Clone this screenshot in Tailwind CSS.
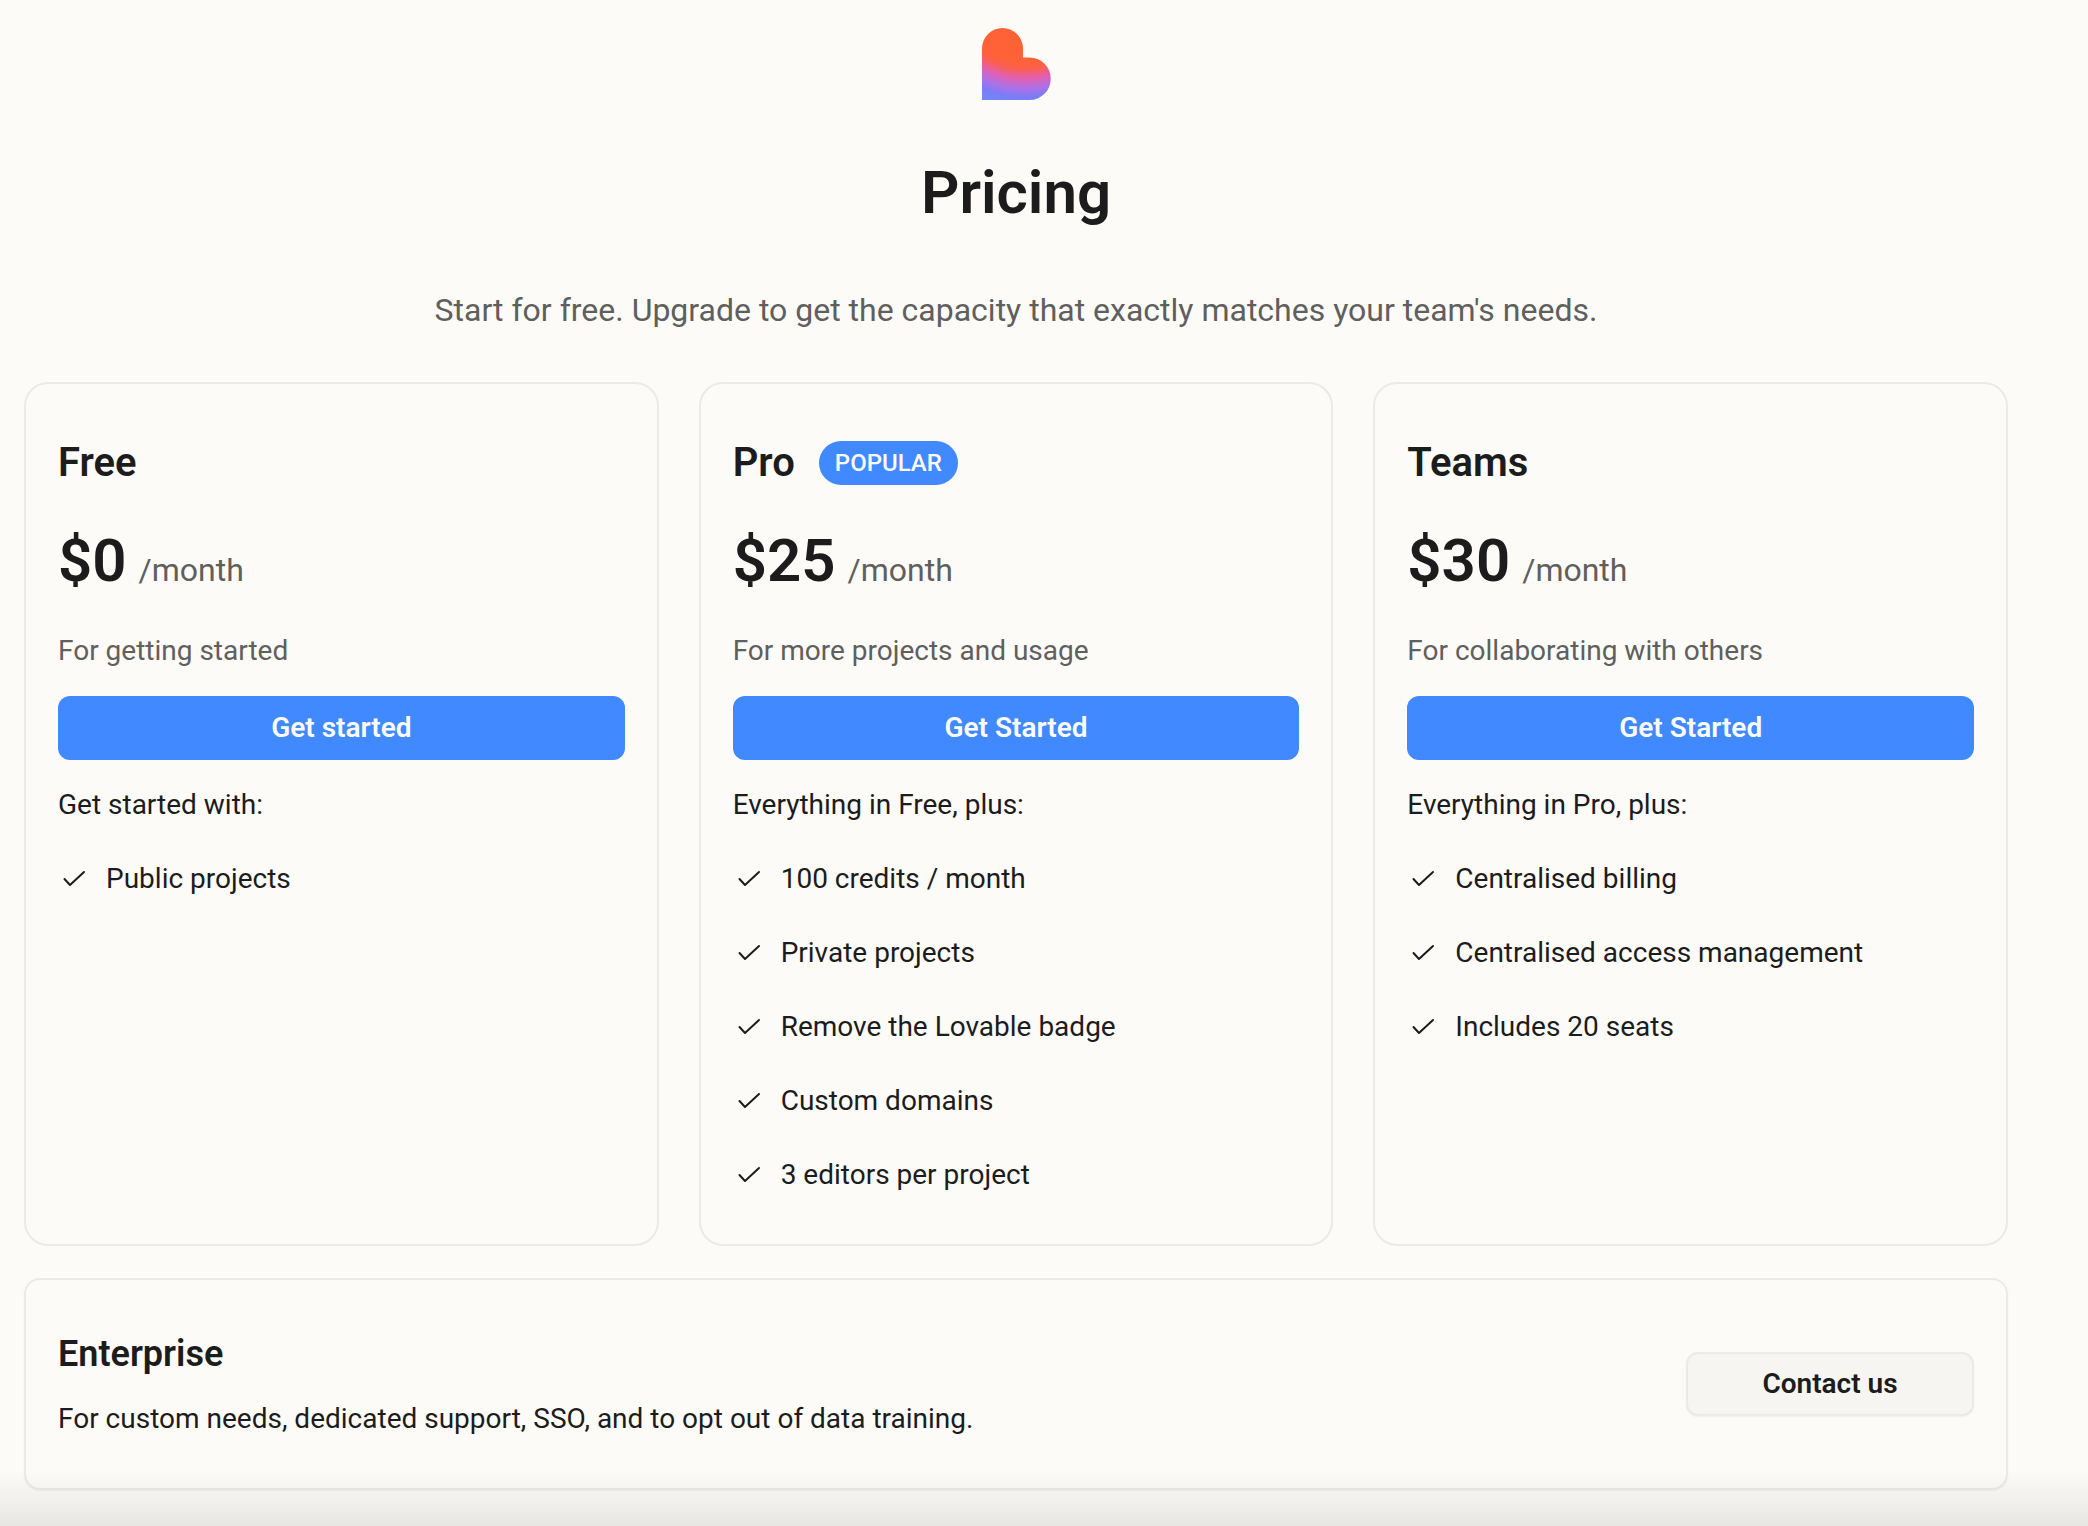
<!DOCTYPE html>
<html lang="en">
<head>
  <meta charset="UTF-8" />
  <meta name="viewport" content="width=device-width, initial-scale=1.0" />
  <title>Pricing | Lovable</title>
  <script src="https://cdn.jsdelivr.net/npm/@tailwindcss/browser@4"></script>
</head>
<body class="min-h-screen bg-[#fcfbf8] font-['Roboto',sans-serif] text-[28px] leading-[42px] text-[#1c1c1c]">
  <main class="pt-7 pb-9 pl-6 pr-20">
    <header class="flex flex-col items-center text-center">
      <svg class="h-[72px] w-[69px]" viewBox="0 0 69 72" aria-label="Lovable" role="img">
        <defs>
          <radialGradient id="heart" gradientUnits="userSpaceOnUse" cx="43" cy="-35" r="112">
            <stop offset="0.62" stop-color="#ff6236" />
            <stop offset="0.68" stop-color="#fa5f50" />
            <stop offset="0.76" stop-color="#e45fae" />
            <stop offset="0.86" stop-color="#a872ea" />
            <stop offset="0.93" stop-color="#7a7cf7" />
            <stop offset="1" stop-color="#7088f5" />
          </radialGradient>
        </defs>
        <path fill="url(#heart)" d="M0 20.5a20.5 20.5 0 0 1 41 0V29.5h6.5a21.25 21.25 0 0 1 0 42.5H0z" />
      </svg>
      <h1 class="mt-[63px] text-[60px] leading-[60px] font-semibold">Pricing</h1>
      <p class="mt-[63px] text-[32px] leading-[48px] text-[#5f5f5d]">Start for free. Upgrade to get the capacity that exactly matches your team's needs.</p>
    </header>

    <section id="plans" class="mt-12 grid grid-cols-3 gap-10"></section>

    <section class="mt-8 flex items-center justify-between rounded-2xl border-2 border-[#eceae6] px-8 py-12 shadow-xs">
      <div>
        <h2 class="text-[36px] leading-[52px] font-semibold">Enterprise</h2>
        <p class="mt-[18px]">For custom needs, dedicated support, SSO, and to opt out of data training.</p>
      </div>
      <button type="button" class="h-16 w-72 rounded-xl border-2 border-[#eceae6] bg-[#f6f5f1] font-semibold shadow-xs">Contact us</button>
    </section>
  </main>

  <!-- fade at the bottom of the window -->
  <div class="pointer-events-none fixed inset-x-0 bottom-0 h-14 bg-linear-to-b from-black/0 to-black/8"></div>

  <script>
    const plans = [
      {
        name: 'Free',
        price: '$0',
        description: 'For getting started',
        button: 'Get started',
        intro: 'Get started with:',
        features: ['Public projects'],
      },
      {
        name: 'Pro',
        badge: 'POPULAR',
        price: '$25',
        description: 'For more projects and usage',
        button: 'Get Started',
        intro: 'Everything in Free, plus:',
        features: ['100 credits / month', 'Private projects', 'Remove the Lovable badge', 'Custom domains', '3 editors per project'],
      },
      {
        name: 'Teams',
        price: '$30',
        description: 'For collaborating with others',
        button: 'Get Started',
        intro: 'Everything in Pro, plus:',
        features: ['Centralised billing', 'Centralised access management', 'Includes 20 seats'],
      },
    ];

    document.getElementById('plans').innerHTML = plans.map(plan => {
      const badge = plan.badge
        ? `<span class="flex h-11 items-center rounded-full bg-[#4089ff] px-4 text-[24px] font-medium text-[#fcfbf8]">${plan.badge}</span>`
        : '';

      return `
        <article class="rounded-3xl border-2 border-[#eceae6] px-8 py-12">
          <div class="flex items-center gap-6">
            <h2 class="text-[40px] leading-[62px] font-semibold">${plan.name}</h2>
            ${badge}
          </div>
          <p class="mt-[37px] flex items-baseline gap-3">
            <span class="text-[60px] leading-[60px] font-semibold">${plan.price}</span>
            <span class="text-[32px] leading-[48px] text-[#5f5f5d]">/month</span>
          </p>
          <p class="mt-9 text-[#5f5f5d]">${plan.description}</p>
          <button type="button" class="mt-6 h-16 w-full rounded-xl bg-[#4089ff] font-semibold text-[#fcfbf8]">${plan.button}</button>
          <p class="mt-6">${plan.intro}</p>
          <ul class="mt-8 space-y-8">
            ${plan.features.map(feature => `
              <li class="flex items-center gap-4">
                <svg class="size-8 shrink-0" viewBox="0 0 32 32" fill="none" stroke="currentColor" stroke-width="2" stroke-linecap="round" stroke-linejoin="round" aria-hidden="true">
                  <path d="M6.500 16l5.500 6L26 9" />
                </svg>
                <span>${feature}</span>
              </li>
            `).join('')}
          </ul>
        </article>
      `;
    }).join('');
  </script>
</body>
</html>
